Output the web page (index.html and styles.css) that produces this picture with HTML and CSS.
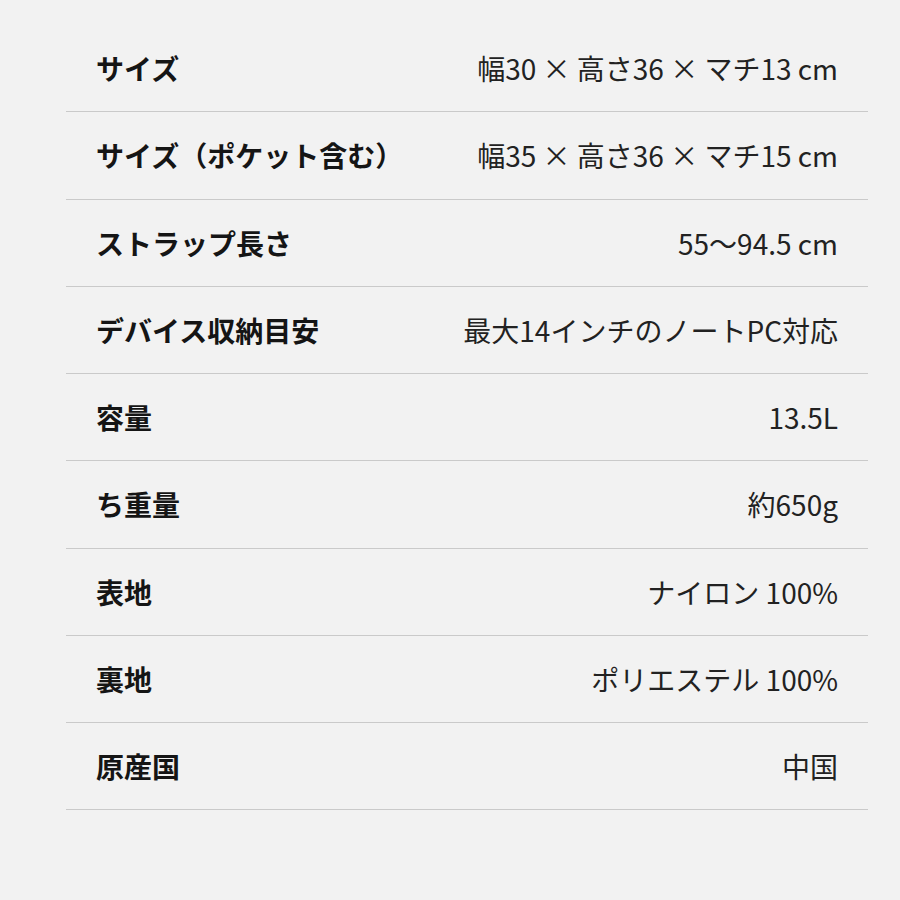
FILE: index.html
```html
<!DOCTYPE html>
<html lang="ja">
<head>
<meta charset="utf-8">
<link rel="stylesheet" href="styles.css">
</head>
<body>
<div class="spec">
  <div class="row"><div class="label">サイズ</div><div class="value">幅30 × 高さ36 × マチ13 cm</div></div>
  <div class="row"><div class="label">サイズ（ポケット含む）</div><div class="value">幅35 × 高さ36 × マチ15 cm</div></div>
  <div class="row"><div class="label">ストラップ長さ</div><div class="value">55〜94.5 cm</div></div>
  <div class="row"><div class="label">デバイス収納目安</div><div class="value">最大14インチのノートPC対応</div></div>
  <div class="row"><div class="label">容量</div><div class="value">13.5L</div></div>
  <div class="row"><div class="label">ち重量</div><div class="value">約650g</div></div>
  <div class="row"><div class="label">表地</div><div class="value">ナイロン 100%</div></div>
  <div class="row"><div class="label">裏地</div><div class="value">ポリエステル 100%</div></div>
  <div class="row"><div class="label">原産国</div><div class="value">中国</div></div>
</div>
</body>
</html>
```
FILE: styles.css
```css
html, body {
  margin: 0;
  padding: 0;
  background: #f2f2f2;
}
body {
  font-family: "Noto Sans CJK JP", "Noto Sans", sans-serif;
  width: 900px;
  height: 900px;
  overflow: hidden;
}
.spec {
  margin: 25px 0 0 66px;
  width: 802px;
}
.row {
  height: 86.25px;
  border-bottom: 1px solid #cacaca;
  display: flex;
  align-items: center;
  justify-content: space-between;
  padding: 0 30px;
  box-sizing: content-box;
}
.label {
  font-size: 28px;
  font-weight: 700;
  color: #151515;
}
.value {
  font-size: 28px;
  font-weight: 400;
  color: #222;
}
```
